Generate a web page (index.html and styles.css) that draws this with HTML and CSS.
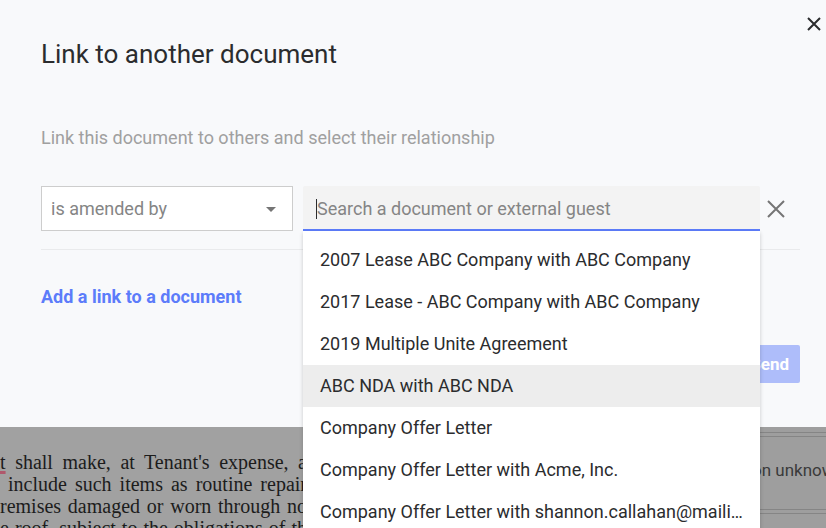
FILE: index.html
```html
<!DOCTYPE html>
<html lang="en">
<head>
    <meta charset="UTF-8">
    <meta name="viewport" content="width=device-width, initial-scale=1.0">
    <title>Link to another document</title>
    <link rel="stylesheet" href="styles.css">
</head>
<body>

    <main class="dialog" role="dialog" aria-labelledby="dialog-title">
        <button class="icon-btn dialog-close" type="button" aria-label="Close">
            <svg width="14" height="14" viewBox="0 0 14 14"><path d="M1 1l12 12M13 1L1 13"/></svg>
        </button>

        <h1 id="dialog-title">Link to another document</h1>
        <p class="hint">Link this document to others and select their relationship</p>

        <div class="link-row">
            <div class="relation">
                <select aria-label="Relationship">
                    <option>is amended by</option>
                </select>
                <svg class="arrow" width="10" height="6" viewBox="0 0 10 6"><path d="M0 0h10L5 5z"/></svg>
            </div>
            <div class="search">
                <input type="text" placeholder="Search a document or external guest" aria-label="Search a document or external guest">
                <span class="caret"></span>
                <ul class="results" role="listbox" aria-label="Documents">
                    <li role="option">2007 Lease ABC Company with ABC Company</li>
                    <li role="option">2017 Lease - ABC Company with ABC Company</li>
                    <li role="option">2019 Multiple Unite Agreement</li>
                    <li role="option" class="active" aria-selected="true">ABC NDA with ABC NDA</li>
                    <li role="option">Company Offer Letter</li>
                    <li role="option">Company Offer Letter with Acme, Inc.</li>
                    <li role="option">Company Offer Letter with shannon.callahan@maili...</li>
                </ul>
            </div>
            <button class="icon-btn remove" type="button" aria-label="Remove link">
                <svg width="18" height="18" viewBox="0 0 18 18"><path d="M1 1l16 16M17 1L1 17"/></svg>
            </button>
        </div>

        <a class="add-link" href="#">Add a link to a document</a>

        <div class="actions">
            <button class="send" type="button" disabled>Send</button>
        </div>
    </main>

    <div class="backdrop">
        <article class="contract">
            <p><span class="typo">t</span> shall make, at Tenant's expense, a</p>
            <p class="indent">include such items as routine repair</p>
            <p>remises damaged or worn through no</p>
            <p>e roof, subject to the obligations of th</p>
        </article>
        <aside class="activity">
            <div class="card"></div>
            <div class="card">on unknow</div>
            <div class="card"></div>
        </aside>
    </div>

</body>
</html>
```
FILE: styles.css
```css
* {
    box-sizing: border-box;
}

body {
    margin: 0;
    height: 100vh;
    overflow: hidden;
    display: flex;
    flex-direction: column;
    font-family: Roboto, Arial, sans-serif;
    font-size: 18px;
    color: #2b2c2e;
    background-color: #a1a1a1;
}

button,
input,
select {
    font: inherit;
}

.dialog {
    position: relative;
    flex: none;
    padding: 38px 26px 44px 41px;
    background-color: #f8f9fb;
}

.dialog h1 {
    margin: 0;
    font-size: 26px;
    font-weight: 400;
    line-height: 32px;
}

.hint {
    margin: 56px 0 36px;
    line-height: 24px;
    color: #a0a0a0;
}

.icon-btn {
    display: flex;
    align-items: center;
    justify-content: center;
    padding: 0;
    border: none;
    background: none;
    cursor: pointer;
}

.icon-btn path {
    fill: none;
    stroke: currentColor;
    stroke-width: 2;
}

.dialog-close {
    position: absolute;
    top: 14px;
    right: 2px;
    width: 20px;
    height: 20px;
    color: #2b2c2e;
}

.remove {
    flex: none;
    width: 20px;
    margin: 0 14px 0 6px;
    color: #757575;
}

.link-row {
    display: flex;
    padding-bottom: 18px;
    border-bottom: 1px solid #e9eaec;
}

.relation {
    position: relative;
    flex: 0 0 252px;
    margin-right: 10px;
}

.relation select {
    width: 100%;
    height: 45px;
    padding: 0 9px;
    border: 1px solid #cdcdcd;
    border-radius: 0;
    appearance: none;
    background-color: #fff;
    color: #858585;
}

.arrow {
    position: absolute;
    top: 21px;
    right: 17px;
    fill: #757575;
    pointer-events: none;
}

.search {
    position: relative;
    flex: 1;
}

.search input {
    display: block;
    width: 100%;
    height: 45px;
    padding: 1px 14px 0;
    border: none;
    border-bottom: 2px solid #5c7cfa;
    border-radius: 2px 2px 0 0;
    outline: none;
    background-color: #f3f3f3;
}

.search input::placeholder {
    color: #858585;
    opacity: 1;
}

.caret {
    position: absolute;
    top: 13px;
    left: 13px;
    width: 1px;
    height: 20px;
    background-color: #2b2c2e;
}

.results {
    position: absolute;
    z-index: 2;
    top: 100%;
    left: 0;
    width: 100%;
    margin: 0;
    padding: 8px 0;
    list-style: none;
    background-color: #fff;
    box-shadow: 0 2px 4px rgba(0, 0, 0, 0.2);
}

.results li {
    padding: 0 17px;
    line-height: 42px;
    white-space: nowrap;
    overflow: hidden;
    text-overflow: ellipsis;
}

.results .active {
    background-color: #ededed;
}

.add-link {
    display: inline-block;
    margin-top: 35px;
    line-height: 24px;
    font-weight: 700;
    color: #5c7cfa;
    text-decoration: none;
}

.actions {
    display: flex;
    justify-content: flex-end;
    margin-top: 36px;
}

.send {
    height: 38px;
    padding: 0 11px;
    border: none;
    border-radius: 2px;
    font-size: 17px;
    font-weight: 700;
    color: #fff;
    background-color: #aebdfa;
}

/* dimmed page under the dialog */
.backdrop {
    flex: 1;
    min-height: 0;
    display: flex;
    justify-content: space-between;
    overflow: hidden;
}

.contract {
    width: 307px;
    padding-top: 24px;
    font-family: "Liberation Serif", "Times New Roman", serif;
    font-size: 20px;
    line-height: 22px;
    color: #1c1c1c;
}

.contract p {
    margin: 0;
    white-space: nowrap;
    text-align: justify;
    text-align-last: justify;
}

.contract .indent {
    padding-left: 8px;
}

.typo {
    text-decoration: underline 3px #b0586c;
    text-underline-offset: 2px;
}

.activity {
    width: 74px;
    font-size: 17px;
    color: #3a3a3a;
    background-color: #9e9e9e;
}

.card {
    height: 74px;
    padding-top: 3px;
    border: 1px solid #858585;
    border-width: 1px 0;
    line-height: 60px;
    margin-bottom: 3px;
    white-space: nowrap;
}

.card:first-child {
    height: 6px;
    border-top: none;
}
```
